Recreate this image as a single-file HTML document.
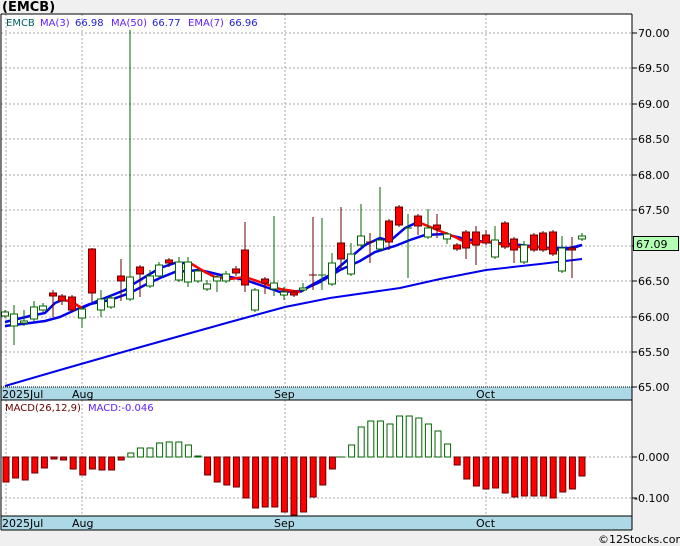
<!DOCTYPE html>
<html><head><meta charset="utf-8"><style>
html,body{margin:0;padding:0;background:#f0f0f0;}
svg{display:block;font-family:"DejaVu Sans","Liberation Sans",sans-serif;}
.g{stroke:#006400;fill:#fff;stroke-width:1}
.r{stroke:#600;fill:#f00;stroke-width:1}
.wg{stroke:#006400;stroke-width:1}
.wr{stroke:#600;stroke-width:1}
.grid{stroke:#aaa;stroke-width:1;stroke-dasharray:2,2}
.ax{font-size:11px;fill:#000}
</style></head><body>
<svg width="680" height="546" viewBox="0 0 680 546" xmlns="http://www.w3.org/2000/svg">
<rect x="0" y="0" width="680" height="546" fill="#f0f0f0"/>
<text x="2" y="11" font-size="13" font-weight="bold" fill="#000">(EMCB)</text>
<rect x="1" y="14" width="631" height="516" fill="#fff"/>
<!-- grids main -->
<g class="grid">
<line x1="1" y1="33" x2="632" y2="33"/><line x1="1" y1="68" x2="632" y2="68"/><line x1="1" y1="104" x2="632" y2="104"/><line x1="1" y1="139" x2="632" y2="139"/><line x1="1" y1="175" x2="632" y2="175"/><line x1="1" y1="210" x2="632" y2="210"/><line x1="1" y1="246" x2="632" y2="246"/><line x1="1" y1="281" x2="632" y2="281"/><line x1="1" y1="317" x2="632" y2="317"/><line x1="1" y1="352" x2="632" y2="352"/>
<line x1="6" y1="14" x2="6" y2="387"/><line x1="82" y1="14" x2="82" y2="387"/><line x1="285" y1="14" x2="285" y2="387"/><line x1="486" y1="14" x2="486" y2="387"/>
<line x1="1" y1="457" x2="632" y2="457"/><line x1="1" y1="498" x2="632" y2="498"/>
<line x1="6" y1="400" x2="6" y2="516"/><line x1="82" y1="400" x2="82" y2="516"/><line x1="285" y1="400" x2="285" y2="516"/><line x1="486" y1="400" x2="486" y2="516"/>
</g>
<text x="6" y="26" font-size="10" fill="#006060">EMCB</text>
<text x="40" y="26" font-size="10" fill="#6020ff">MA(3)</text>
<text x="75" y="26" font-size="10" fill="#2020d0">66.98</text>
<text x="111" y="26" font-size="10" fill="#6020ff">MA(50)</text>
<text x="152" y="26" font-size="10" fill="#2020d0">66.77</text>
<text x="188" y="26" font-size="10" fill="#6020ff">EMA(7)</text>
<text x="229" y="26" font-size="10" fill="#2020d0">66.96</text>
<!-- MA50 -->
<polyline fill="none" stroke="#0000ee" stroke-width="2" points="5,386 60,370 130,350 230,322 285,307 330,298 400,288 440,279 486,270 540,264 582,259"/>
<!-- EMA7 -->
<polyline fill="none" stroke="#0000ee" stroke-width="2.5" points="5,326 30,323 45,321 60,317 75,310 90,304 110,300 130,293 145,285 160,278 175,272 200,270 225,276 245,280 260,285 280,292 300,291 320,282 340,270 360,261 375,252 395,246 410,240 425,235 445,234 465,239 486,242 520,245 550,248 570,248 582,245"/>
<!-- MA3 -->
<polyline fill="none" stroke="#0000ee" stroke-width="2.5" points="5,322 30,316 45,313 55,303 62,300"/>
<polyline fill="none" stroke="#f00" stroke-width="2.5" points="62,300 70,301 82,308"/>
<polyline fill="none" stroke="#0000ee" stroke-width="2.5" points="82,308 95,302 110,296 125,290 135,283 145,277 160,268 175,263 190,263"/>
<polyline fill="none" stroke="#f00" stroke-width="2.5" points="190,263 205,272 215,277 230,279 245,277 260,282 280,289 300,292"/>
<polyline fill="none" stroke="#0000ee" stroke-width="2.5" points="300,292 310,286 330,275 345,262 365,245 380,238 390,241 405,228 418,222"/>
<polyline fill="none" stroke="#f00" stroke-width="2.5" points="418,222 440,231 455,237 465,242 475,243 486,241 495,243 505,245 520,247 540,247 555,250"/>
<polyline fill="none" stroke="#0000ee" stroke-width="2.5" points="555,250 570,249 582,245"/>
<!-- candles -->
<g>
<line class="wg" x1="5" y1="310" x2="5" y2="318"/><rect class="g" x="1.5" y="312" width="7" height="4"/>
<line class="wg" x1="14" y1="305" x2="14" y2="345"/><rect class="g" x="10.5" y="314" width="7" height="12"/>
<line class="wg" x1="24" y1="310" x2="24" y2="326"/><rect class="g" x="20.5" y="321" width="7" height="2"/>
<line class="wg" x1="34" y1="301" x2="34" y2="321"/><rect class="g" x="30.5" y="307" width="7" height="12"/>
<line class="wg" x1="43" y1="303" x2="43" y2="312"/><rect class="g" x="39.5" y="306" width="7" height="4"/>
<line class="wr" x1="53" y1="290" x2="53" y2="317"/><rect class="r" x="49.5" y="293" width="7" height="3"/>
<line class="wr" x1="62" y1="294" x2="62" y2="305"/><rect class="r" x="58.5" y="296" width="7" height="5"/>
<line class="wr" x1="72" y1="295" x2="72" y2="312"/><rect class="r" x="68.5" y="297" width="7" height="13"/>
<line class="wg" x1="82" y1="306" x2="82" y2="328"/><rect class="g" x="78.5" y="309" width="7" height="9"/>
<line class="wr" x1="92" y1="248" x2="92" y2="303"/><rect class="r" x="88.5" y="249" width="7" height="44"/>
<line class="wg" x1="101" y1="290" x2="101" y2="317"/><rect class="g" x="97.5" y="299" width="7" height="11"/>
<line class="wg" x1="111" y1="295" x2="111" y2="309"/><rect class="g" x="107.5" y="298" width="7" height="9"/>
<line class="wr" x1="121" y1="259" x2="121" y2="301"/><rect class="r" x="117.5" y="276" width="7" height="5"/>
<line class="wg" x1="130" y1="30" x2="130" y2="301"/><rect class="g" x="126.5" y="277" width="7" height="22"/>
<line class="wr" x1="140" y1="265" x2="140" y2="297"/><rect class="r" x="136.5" y="267" width="7" height="7"/>
<line class="wg" x1="150" y1="270" x2="150" y2="288"/><rect class="g" x="146.5" y="276" width="7" height="10"/>
<line class="wg" x1="159" y1="262" x2="159" y2="278"/><rect class="g" x="155.5" y="265" width="7" height="11"/>
<line class="wr" x1="169" y1="258" x2="169" y2="267"/><rect class="r" x="165.5" y="260" width="7" height="3"/>
<line class="wg" x1="179" y1="257" x2="179" y2="282"/><rect class="g" x="175.5" y="262" width="7" height="18"/>
<line class="wg" x1="188" y1="257" x2="188" y2="287"/><rect class="g" x="184.5" y="262" width="7" height="20"/>
<line class="wg" x1="198" y1="268" x2="198" y2="283"/><rect class="g" x="194.5" y="271" width="7" height="10"/>
<line class="wg" x1="207" y1="280" x2="207" y2="291"/><rect class="g" x="203.5" y="284" width="7" height="5"/>
<line class="wg" x1="217" y1="275" x2="217" y2="292"/><rect class="g" x="213.5" y="277" width="7" height="4"/>
<line class="wg" x1="226" y1="271" x2="226" y2="283"/><rect class="g" x="222.5" y="274" width="7" height="7"/>
<line class="wr" x1="236" y1="266" x2="236" y2="276"/><rect class="r" x="232.5" y="269" width="7" height="4"/>
<line class="wr" x1="245" y1="222" x2="245" y2="292"/><rect class="r" x="241.5" y="250" width="7" height="35"/>
<line class="wg" x1="255" y1="288" x2="255" y2="312"/><rect class="g" x="251.5" y="290" width="7" height="20"/>
<line class="wr" x1="265" y1="277" x2="265" y2="294"/><rect class="r" x="261.5" y="279" width="7" height="4"/>
<line class="wg" x1="274" y1="216" x2="274" y2="296"/><rect class="g" x="270.5" y="283" width="7" height="6"/>
<line class="wg" x1="284" y1="287" x2="284" y2="300"/><rect class="g" x="280.5" y="292" width="7" height="3"/>
<line class="wr" x1="294" y1="290" x2="294" y2="297"/><rect class="r" x="290.5" y="292" width="7" height="3"/>
<line class="wg" x1="303" y1="283" x2="303" y2="292"/><rect class="g" x="299.5" y="288" width="7" height="2"/>
<line class="wr" x1="313" y1="217" x2="313" y2="290"/><line class="wr" x1="309" y1="275" x2="317" y2="275"/>
<line class="wg" x1="322" y1="218" x2="322" y2="290"/><line class="wg" x1="318" y1="275" x2="326" y2="275"/>
<line class="wg" x1="332" y1="253" x2="332" y2="286"/><rect class="g" x="328.5" y="263" width="7" height="21"/>
<line class="wr" x1="341" y1="207" x2="341" y2="270"/><rect class="r" x="337.5" y="243" width="7" height="16"/>
<line class="wg" x1="351" y1="243" x2="351" y2="276"/><rect class="g" x="347.5" y="254" width="7" height="20"/>
<line class="wg" x1="361" y1="204" x2="361" y2="248"/><rect class="g" x="357.5" y="236" width="7" height="9"/>
<line class="wr" x1="370" y1="233" x2="370" y2="263"/><line class="wr" x1="366" y1="242" x2="374" y2="242"/>
<line class="wg" x1="380" y1="187" x2="380" y2="251"/><rect class="g" x="376.5" y="240" width="7" height="9"/>
<line class="wr" x1="389" y1="219" x2="389" y2="250"/><rect class="r" x="385.5" y="221" width="7" height="21"/>
<line class="wr" x1="399" y1="205" x2="399" y2="227"/><rect class="r" x="395.5" y="207" width="7" height="18"/>
<line class="wg" x1="408" y1="214" x2="408" y2="278"/><line class="wg" x1="404" y1="228" x2="412" y2="228"/>
<line class="wr" x1="418" y1="214" x2="418" y2="235"/><rect class="r" x="414.5" y="216" width="7" height="10"/>
<line class="wg" x1="428" y1="209" x2="428" y2="239"/><rect class="g" x="424.5" y="228" width="7" height="9"/>
<line class="wr" x1="437" y1="214" x2="437" y2="238"/><rect class="r" x="433.5" y="225" width="7" height="4"/>
<line class="wg" x1="447" y1="232" x2="447" y2="244"/><rect class="g" x="443.5" y="234" width="7" height="5"/>
<line class="wr" x1="457" y1="243" x2="457" y2="251"/><rect class="r" x="453.5" y="245" width="7" height="4"/>
<line class="wr" x1="466" y1="230" x2="466" y2="259"/><rect class="r" x="462.5" y="232" width="7" height="16"/>
<line class="wr" x1="476" y1="226" x2="476" y2="265"/><rect class="r" x="472.5" y="232" width="7" height="13"/>
<line class="wr" x1="486" y1="230" x2="486" y2="245"/><rect class="r" x="482.5" y="235" width="7" height="8"/>
<line class="wg" x1="495" y1="226" x2="495" y2="259"/><rect class="g" x="491.5" y="240" width="7" height="17"/>
<line class="wr" x1="505" y1="221" x2="505" y2="249"/><rect class="r" x="501.5" y="223" width="7" height="24"/>
<line class="wr" x1="514" y1="237" x2="514" y2="263"/><rect class="r" x="510.5" y="239" width="7" height="11"/>
<line class="wg" x1="524" y1="241" x2="524" y2="264"/><rect class="g" x="520.5" y="245" width="7" height="17"/>
<line class="wr" x1="534" y1="233" x2="534" y2="252"/><rect class="r" x="530.5" y="235" width="7" height="15"/>
<line class="wr" x1="543" y1="231" x2="543" y2="252"/><rect class="r" x="539.5" y="233" width="7" height="17"/>
<line class="wr" x1="553" y1="230" x2="553" y2="256"/><rect class="r" x="549.5" y="232" width="7" height="22"/>
<line class="wg" x1="562" y1="236" x2="562" y2="273"/><rect class="g" x="558.5" y="248" width="7" height="23"/>
<line class="wr" x1="572" y1="237" x2="572" y2="278"/><rect class="r" x="568.5" y="248" width="7" height="2"/>
<line class="wg" x1="582" y1="233" x2="582" y2="241"/><rect class="g" x="578.5" y="236" width="7" height="3"/>
</g>
<!-- date band 1 -->
<rect x="1" y="387" width="631" height="13" fill="#add8e6"/>
<line x1="1" y1="387" x2="632" y2="387" stroke="#000" stroke-dasharray="1,1"/>
<line x1="1" y1="400" x2="632" y2="400" stroke="#000"/>
<text x="2" y="398" class="ax">2025Jul</text><text x="72" y="398" class="ax">Aug</text><text x="274" y="398" class="ax">Sep</text><text x="476" y="398" class="ax">Oct</text>
<!-- MACD -->
<text x="5" y="411" font-size="10" fill="#600">MACD(26,12,9)</text>
<text x="88" y="411" font-size="10" fill="#6020ff">MACD:-0.046</text>
<g class="r">
<rect x="3" y="457" width="6" height="25"/><rect x="12.6" y="457" width="6" height="21"/><rect x="22.2" y="457" width="6" height="23"/><rect x="31.8" y="457" width="6" height="16"/><rect x="41.4" y="457" width="6" height="11"/><rect x="51" y="457" width="6" height="2"/><rect x="60.6" y="457" width="6" height="3"/><rect x="70.2" y="457" width="6" height="12"/><rect x="79.8" y="457" width="6" height="18"/><rect x="89.4" y="457" width="6" height="12"/><rect x="99" y="457" width="6" height="13"/><rect x="108.6" y="457" width="6" height="13"/><rect x="118.2" y="457" width="6" height="3"/>
<rect x="204.6" y="457" width="6" height="18"/><rect x="214.2" y="457" width="6" height="25"/><rect x="223.8" y="457" width="6" height="28"/><rect x="233.4" y="457" width="6" height="30"/><rect x="243" y="457" width="6" height="41"/><rect x="252.6" y="457" width="6" height="51"/><rect x="262.2" y="457" width="6" height="50"/><rect x="271.8" y="457" width="6" height="50"/><rect x="281.4" y="457" width="6" height="55"/><rect x="291" y="457" width="6" height="58"/><rect x="300.6" y="457" width="6" height="55"/><rect x="310.2" y="457" width="6" height="40"/><rect x="319.8" y="457" width="6" height="28"/><rect x="329.4" y="457" width="6" height="12"/>
<rect x="454.2" y="457" width="6" height="8"/><rect x="463.8" y="457" width="6" height="22"/><rect x="473.4" y="457" width="6" height="29"/><rect x="483" y="457" width="6" height="32"/><rect x="492.6" y="457" width="6" height="31"/><rect x="502.2" y="457" width="6" height="36"/><rect x="511.8" y="457" width="6" height="40"/><rect x="521.4" y="457" width="6" height="39"/><rect x="531" y="457" width="6" height="39"/><rect x="540.6" y="457" width="6" height="39"/><rect x="550.2" y="457" width="6" height="41"/><rect x="559.8" y="457" width="6" height="35"/><rect x="569.4" y="457" width="6" height="32"/><rect x="579" y="457" width="6" height="19"/>
</g>
<g class="g">
<rect x="127.8" y="453" width="6" height="4"/><rect x="137.4" y="448" width="6" height="9"/><rect x="147" y="448" width="6" height="9"/><rect x="156.6" y="443" width="6" height="14"/><rect x="166.2" y="442" width="6" height="15"/><rect x="175.8" y="442" width="6" height="15"/><rect x="185.4" y="445" width="6" height="12"/><rect x="195" y="456" width="6" height="1"/>
<line x1="336" y1="457" x2="345" y2="457"/>
<rect x="348.6" y="445" width="6" height="12"/><rect x="358.2" y="427" width="6" height="30"/><rect x="367.8" y="421" width="6" height="36"/><rect x="377.4" y="421" width="6" height="36"/><rect x="387" y="424" width="6" height="33"/><rect x="396.6" y="416" width="6" height="41"/><rect x="406.2" y="416" width="6" height="41"/><rect x="415.8" y="418" width="6" height="39"/><rect x="425.4" y="424" width="6" height="33"/><rect x="435" y="431" width="6" height="26"/><rect x="444.6" y="444" width="6" height="13"/>
</g>
<!-- date band 2 -->
<rect x="1" y="516" width="631" height="14" fill="#add8e6"/>
<line x1="1" y1="516" x2="632" y2="516" stroke="#000"/>
<line x1="1" y1="530" x2="632" y2="530" stroke="#000"/>
<text x="2" y="527" class="ax">2025Jul</text><text x="72" y="527" class="ax">Aug</text><text x="274" y="527" class="ax">Sep</text><text x="476" y="527" class="ax">Oct</text>
<!-- frame -->
<line x1="1" y1="14" x2="632" y2="14" stroke="#000"/>
<line x1="1" y1="14" x2="1" y2="530" stroke="#000"/>
<line x1="632" y1="14" x2="632" y2="530" stroke="#000"/>
<!-- right axis -->
<g stroke="#000">
<line x1="632" y1="33" x2="637" y2="33"/><line x1="632" y1="68" x2="637" y2="68"/><line x1="632" y1="104" x2="637" y2="104"/><line x1="632" y1="139" x2="637" y2="139"/><line x1="632" y1="175" x2="637" y2="175"/><line x1="632" y1="210" x2="637" y2="210"/><line x1="632" y1="246" x2="637" y2="246"/><line x1="632" y1="281" x2="637" y2="281"/><line x1="632" y1="317" x2="637" y2="317"/><line x1="632" y1="352" x2="637" y2="352"/><line x1="632" y1="387" x2="637" y2="387"/>
<line x1="632" y1="457" x2="637" y2="457"/><line x1="632" y1="498" x2="637" y2="498"/>
</g>
<g class="ax">
<text x="638" y="37">70.00</text><text x="638" y="72">69.50</text><text x="638" y="108">69.00</text><text x="638" y="143">68.50</text><text x="638" y="179">68.00</text><text x="638" y="214">67.50</text><text x="638" y="285">66.50</text><text x="638" y="321">66.00</text><text x="638" y="356">65.50</text><text x="638" y="391">65.00</text>
<text x="638" y="461">0.000</text><text x="634" y="502">-0.100</text>
</g>
<rect x="633.5" y="236.5" width="45" height="14" fill="#b3ffb3" stroke="#000"/>
<text x="636" y="248" class="ax">67.09</text>
<text x="598" y="543" font-size="11" fill="#000">©12Stocks.com</text>
</svg>
</body></html>
